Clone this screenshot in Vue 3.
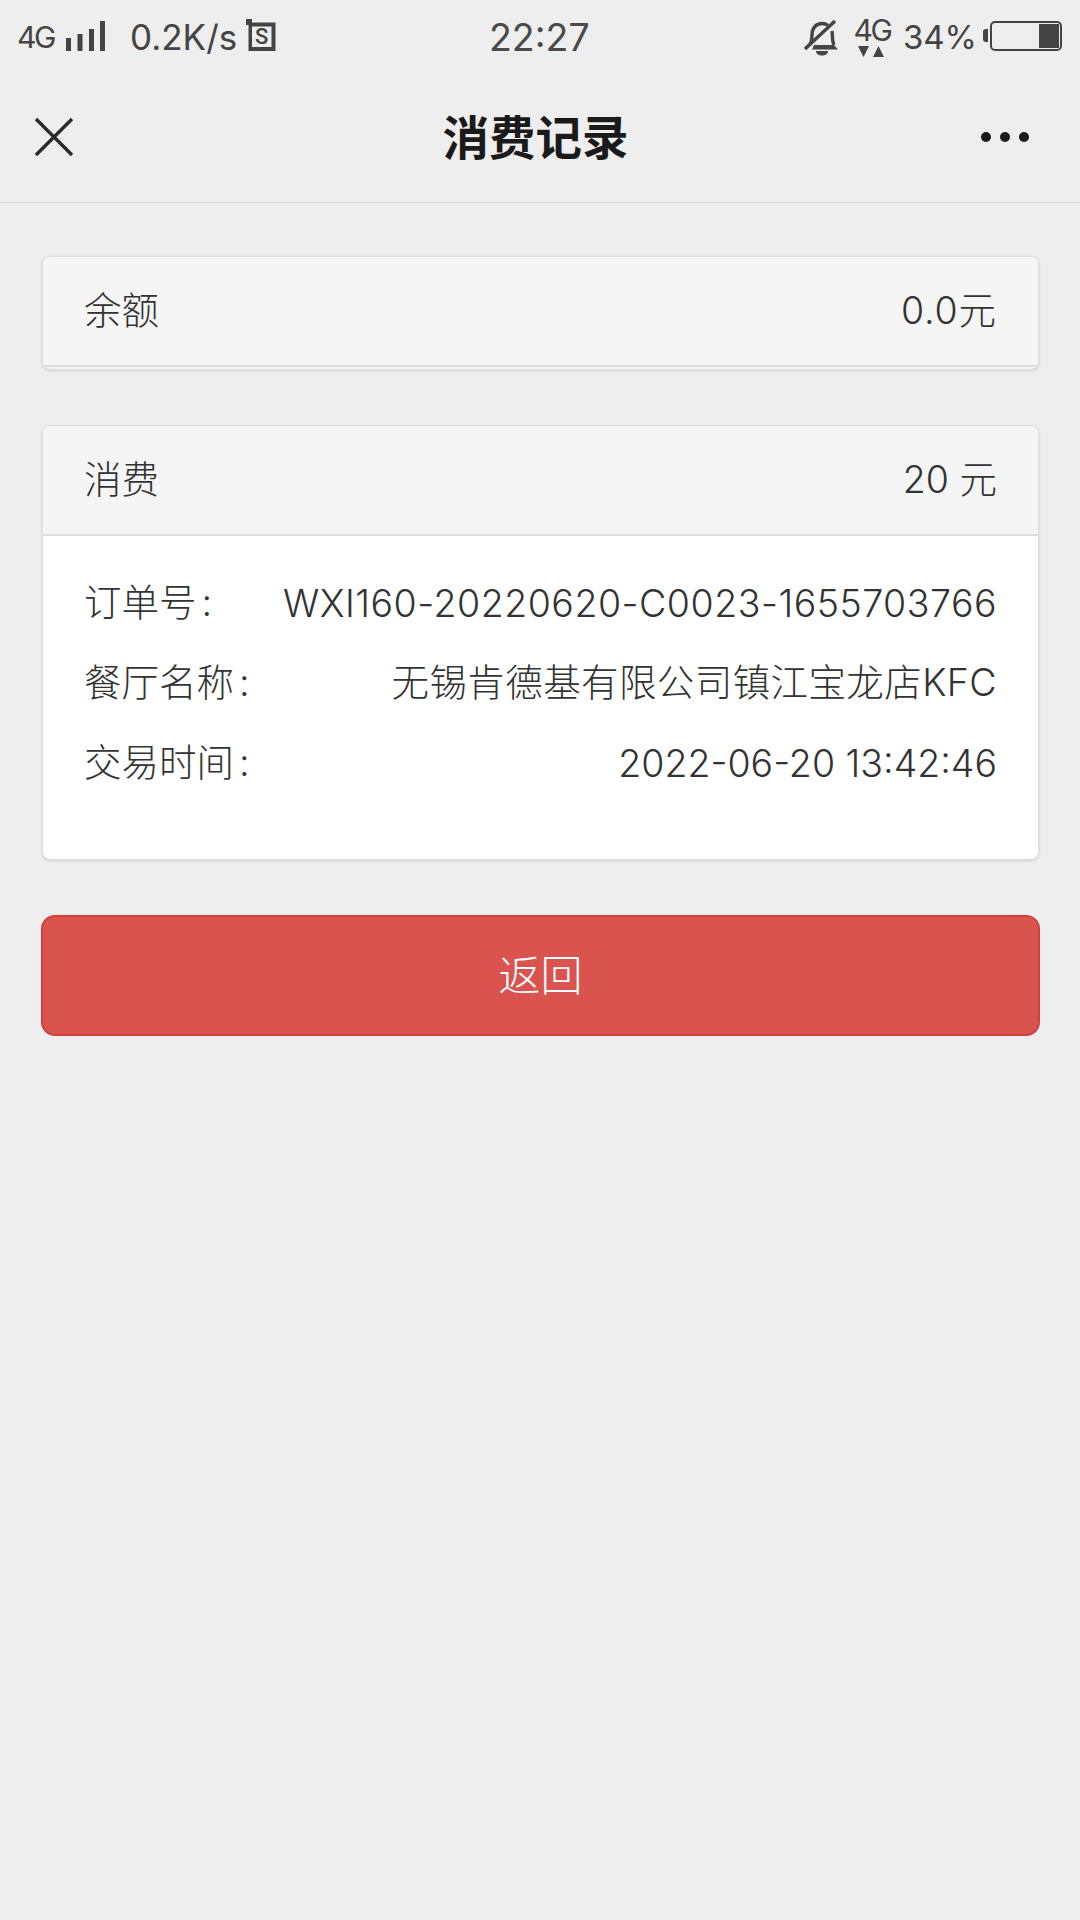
<template>
  <div class="page">
    <div class="status">
      <div class="st-left">
        <span class="net">4G</span>
        <svg class="signal" width="42" height="32" viewBox="0 0 42 32"><rect x="1" y="18" width="5" height="13" /><rect x="12.500" y="14" width="5" height="17" /><rect x="24" y="9" width="5" height="22" /><rect x="35" y="1" width="5" height="30" /></svg>
        <span class="speed">0.2K/s</span>
        <svg class="sim" width="30" height="34" viewBox="0 0 30 34"><path d="M0 0h6v3.500h23.500V32H2.500V6H0z" fill="#444"/><rect x="6" y="7.500" width="19.500" height="20.500" fill="#eee"/><text x="15.700" y="25" text-anchor="middle" class="simtxt">S</text></svg>
      </div>
      <div class="clock">22:27</div>
      <div class="st-right">
        <svg class="bell" width="36" height="36" viewBox="0 0 36 36"><path d="M6 25c1.500-3 2-5 2-10C8 8 12 3.500 18 3.500c2.500 0 4.500.7 6 2M28 11c.3 1.500.3 2.500.3 4 0 5 .5 7 1.500 10" fill="none" stroke="#444" stroke-width="3.400"/><path d="M1 29L31 1" stroke="#444" stroke-width="3.400"/><path d="M10 25h20l4 4.500H8z" fill="#444"/><path d="M12 31h12c0 3-2.500 4.500-6 4.500s-6-1.500-6-4.500z" fill="#444"/></svg>
        <div class="net-up">
          <span class="net2">4G</span>
          <svg width="28" height="13" viewBox="0 0 28 13" class="arrows"><path d="M1 1h11L6.500 12zM16 12h11L21.500 1z" fill="#444"/></svg>
        </div>
        <span class="pct">34%</span>
        <div class="battery"><i class="nub"></i><i class="cell"></i></div>
      </div>
    </div>
    <header class="nav">
      <svg class="close" width="40" height="40" viewBox="0 0 40 40"><path d="M2 2l36 36M38 2L2 38" stroke="#2b2b2b" stroke-width="3.400" fill="none"/></svg>
      <h1 class="title">消费记录</h1>
      <div class="dots"><i></i><i></i><i></i></div>
    </header>
    <main class="main">
      <section class="card card-first">
        <div class="card-head"><span>余额</span><span class="balance">0.0元</span></div>
      </section>
      <section class="card">
        <div class="card-head"><span>消费</span><span>20 元</span></div>
        <div class="card-body">
          <div v-for="r in rows" :key="r.k" class="row">
            <span class="lift">{{ r.k }}<i class="colon">:</i></span>
            <span :class="r.c">{{ r.v }}</span>
          </div>
        </div>
      </section>
      <button class="back">返回</button>
    </main>
  </div>
</template>

<script setup>
const rows = [
  { k: '订单号', v: 'WXI160-20220620-C0023-1655703766', c: 'v-id' },
  { k: '餐厅名称', v: '无锡肯德基有限公司镇江宝龙店KFC', c: 'v-shop lift' },
  { k: '交易时间', v: '2022-06-20 13:42:46', c: 'v-time' }
]
</script>

<style>
html, body { background: #eeeeee; }
</style>

<style scoped>
.page {
  width: 1080px;
  height: 1920px;
  background: #eeeeee;
  font-family: Inter, "Noto Sans CJK SC", sans-serif;
  overflow: hidden;
}
.status {
  height: 74px;
  display: flex;
  align-items: center;
  justify-content: space-between;
  padding: 0 18px 0 17px;
  color: #444;
  position: relative;
}
.st-left, .st-right { display: flex; align-items: center; }
.net { font-size: 30px; letter-spacing: -2.500px; width: 38px; }
.signal { fill: #444; margin-left: 10px; margin-top: -2px; }
.speed { font-size: 35px; margin-left: 23px; font-weight: 400; }
.sim { margin-left: 9px; margin-top: -3px; }
.simtxt { font-size: 22px; fill: #444; font-family: Roboto, sans-serif; font-weight: 500; }
.clock {
  position: absolute;
  left: 489px;
  top: 14px;
  font-size: 37.500px;
  line-height: 48px;
  color: #4a4a4a;
}
.bell { margin-right: 13px; margin-top: 2px; }
.net-up { display: flex; flex-direction: column; align-items: center; width: 38px; margin-right: 12px; margin-top: -2px; }
.net2 { font-size: 30px; line-height: 31px; letter-spacing: -2.500px; }
.arrows { margin-top: -1px; margin-left: -2px; }
.pct { font-size: 33px; margin-right: 13px; }
.battery {
  position: relative;
  width: 72px;
  height: 30px;
  margin-top: -2px;
  box-sizing: border-box;
  border: 2.500px solid #444;
  border-radius: 5px;
}
.nub { position: absolute; left: -9px; top: 6px; width: 5px; height: 13px; background: #444; border-radius: 3px 0 0 3px; }
.cell { position: absolute; right: 1px; top: 1px; bottom: 1px; width: 20px; background: #444; }
.nav {
  height: 129px;
  box-sizing: border-box;
  border-bottom: 1px solid #d8d8d8;
  display: flex;
  align-items: center;
  justify-content: space-between;
  padding: 0 51px 0 34px;
  position: relative;
}
.close { margin-top: -3px; }
.title {
  position: absolute;
  left: 0;
  right: 0;
  margin: 0;
  padding-right: 9px;
  text-align: center;
  font-size: 46.500px;
  font-weight: 700;
  color: #1a1a1a;
  line-height: 64px;
}
.dots { display: flex; gap: 9px; margin-top: -3px; }
.dots i { width: 10px; height: 10px; border-radius: 50%; background: #1a1a1a; display: block; }
.main {
  padding: 53px 42px 0;
  display: flex;
  flex-direction: column;
}
.card {
  width: 997px;
  background: #fff;
  border: 1px solid #ddd;
  border-radius: 8px;
  box-shadow: 0 1px 3px rgba(0,0,0,.12);
  overflow: hidden;
  color: #333;
  box-sizing: border-box;
  font-size: 37.500px;
  font-weight: 300;
  margin-bottom: 55px;
}
.card-first { height: 114px; background: #f5f5f5; margin-bottom: 55px; }
.card-head {
  height: 110px;
  background: #f5f5f5;
  border-bottom: 2px solid #ddd;
  box-sizing: border-box;
  display: flex;
  align-items: center;
  justify-content: space-between;
  padding: 0 41px 7px;
}
.balance { letter-spacing: .9px; }
.card-body { padding: 27px 41px 0; height: 323px; box-sizing: border-box; }
.row {
  display: flex;
  justify-content: space-between;
  height: 80px;
  align-items: center;
}
.lift { padding-bottom: 7px; }
.v-id { letter-spacing: .5px; }
.v-shop { letter-spacing: .4px; }
.colon { font-style: normal; margin-left: 5px; }
.back {
  width: 999px;
  height: 121px;
  margin-left: -1px;
  background: #d9534f;
  border: 2px solid #d43f3a;
  border-radius: 14px;
  color: #fff;
  font: inherit;
  font-size: 42px;
  font-weight: 300;
  padding: 0 0 6px;
}
</style>
